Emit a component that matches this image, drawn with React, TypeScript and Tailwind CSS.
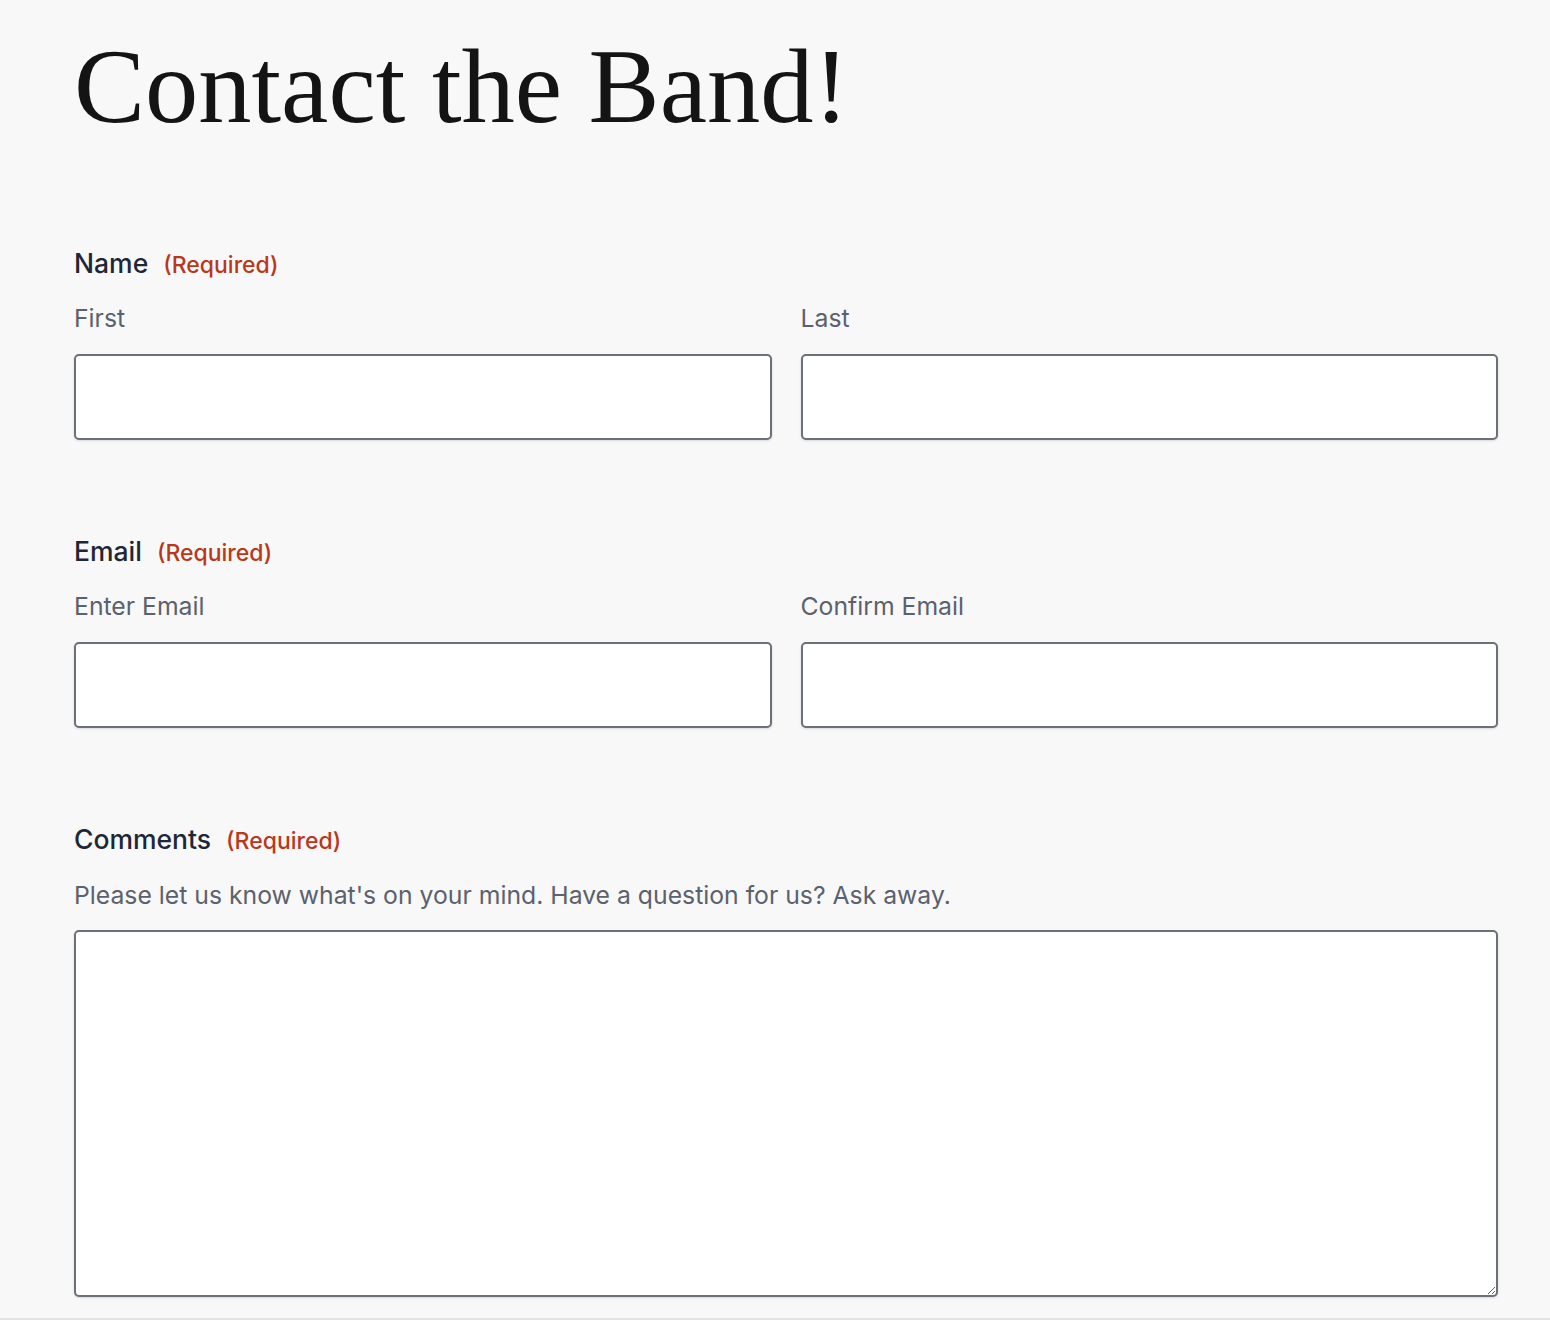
import React from 'react';

const sans = "font-['Inter','Noto_Sans',sans-serif]";

const Required = () => (
  <span className="ml-[15px] text-[23px] font-medium text-[#b9381c]">(Required)</span>
);

const FieldLabel = ({ children }: { children: React.ReactNode }) => (
  <div className="flex items-baseline h-[28px] leading-[28px]">
    <span className="text-[26.5px] font-medium text-[#1d2736]">{children}</span>
    <Required />
  </div>
);

const SubLabel = ({ children }: { children: React.ReactNode }) => (
  <div className="h-[28px] leading-[28px] text-[24.75px] text-[#5b616d]">{children}</div>
);

const inputClass =
  'block w-full h-[86px] bg-white border-2 border-[#6b7079] rounded-[5px] shadow-sm px-4 text-[22px] outline-none';

const TwoFields = ({ left, right }: { left: string; right: string }) => (
  <div className="grid grid-cols-2 gap-x-[29px] mt-[27px]">
    <div>
      <SubLabel>{left}</SubLabel>
      <input type="text" className={`${inputClass} mt-[22px]`} />
    </div>
    <div>
      <SubLabel>{right}</SubLabel>
      <input type="text" className={`${inputClass} mt-[22px]`} />
    </div>
  </div>
);

export default function App() {
  return (
    <div className={`h-[1320px] bg-[#f8f8f8] flex flex-col overflow-hidden ${sans}`}>
      <div className="flex-1 pl-[74px] pr-[52px]">
        <h1 className="mt-[33px] text-[106.5px] leading-none text-[#141414] font-['Liberation_Serif','DejaVu_Serif',serif]">
          Contact the Band!
        </h1>

        <form className="mt-[109px]">
          <FieldLabel>Name</FieldLabel>
          <TwoFields left="First" right="Last" />

          <div className="mt-[97px]">
            <FieldLabel>Email</FieldLabel>
            <TwoFields left="Enter Email" right="Confirm Email" />
          </div>

          <div className="mt-[97px]">
            <FieldLabel>Comments</FieldLabel>
            <div className="mt-[28px]">
              <SubLabel>Please let us know what's on your mind. Have a question for us? Ask away.</SubLabel>
            </div>
            <textarea className="mt-[21px] block w-full h-[367px] bg-white border-2 border-[#6b7079] rounded-[5px] shadow-sm p-4 text-[22px] outline-none resize-y" />
          </div>
        </form>
      </div>
      <div className="h-[2px] bg-[#e2e2e2]" />
    </div>
  );
}
